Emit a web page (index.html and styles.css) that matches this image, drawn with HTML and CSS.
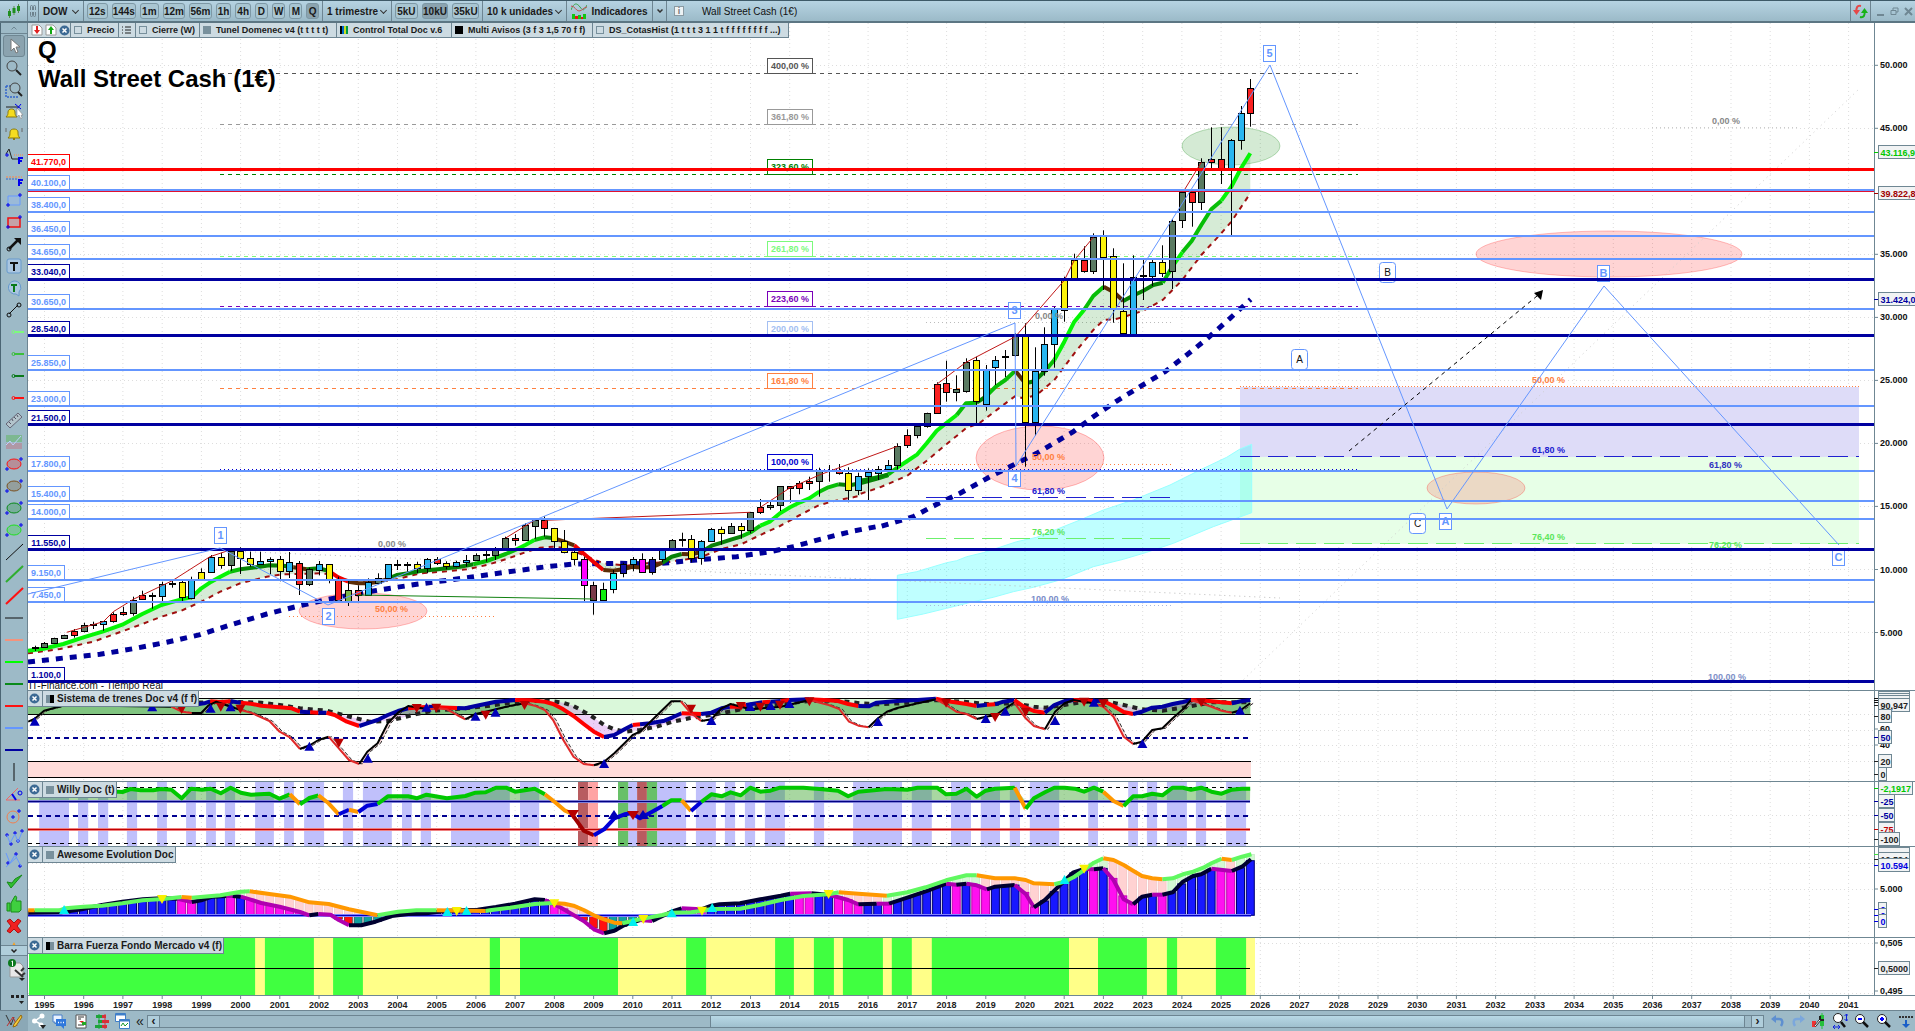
FILE: index.html
```html
<!DOCTYPE html>
<html lang="es">
<head>
<meta charset="utf-8">
<title>DOW - Wall Street Cash (1€)</title>
<link rel="stylesheet" href="styles.css">
</head>
<body>
<header class="toolbar">
  <button class="seg seg-logo" aria-label="Tipo de gráfico"><svg width="14" height="14" viewBox="0 0 14 14"><path d="M2.500 5v9M7 2v9M11.500 0v9" stroke="#5b8a4a"/><path d="M1 7h3v5H1zM5.500 4h3v5h-3zM10 2h3v5h-3z" fill="#1f8f1f"/></svg></button>
  <div class="seg seg-grip"><svg width="8" height="14" viewBox="0 0 8 14" fill="none" stroke="#6d818c"><path d="M1.500 6V2.500a1 1 0 0 1 2 0V6M4.500 6V2.500a1 1 0 0 1 2 0V6M1.500 8v3.500a1 1 0 0 0 2 0V8M4.500 8v3.500a1 1 0 0 0 2 0V8"/></svg></div>
  <div class="seg drop drop-symbol"><select aria-label="Valor"><option>DOW</option></select></div>
  <div class="seg group group-time">
    <button class="w20">12s</button><button class="w24">144s</button><button class="w18">1m</button><button class="w23">12m</button><button class="w23">56m</button><button class="w16">1h</button><button class="w16">4h</button><button class="w12">D</button><button class="w14">W</button><button class="w12">M</button><button class="w12 on">Q</button>
  </div>
  <div class="seg drop drop-period"><select aria-label="Periodo"><option>1 trimestre</option></select></div>
  <div class="seg group group-units">
    <button class="w23">5kU</button><button class="w27 on">10kU</button><button class="w27">35kU</button>
  </div>
  <div class="seg drop drop-units"><select aria-label="Unidades"><option>10 k unidades</option></select></div>
  <button class="seg seg-ind"><svg width="16" height="16" viewBox="0 0 16 16" fill="none"><path d="M0 7C3-1 6 0 9 4s4 4 7-2" stroke="#3aa64a"/><path d="M0 3c4 0 5 5 8 5s5-4 8-4" stroke="#c05050"/><path d="M1 16v-5h3v2h3v-1h3v2h2v-3h3v5z" fill="#12c512"/><path d="M4 16v-3h3v3zM10 16v-2h2v2z" fill="#e11"/></svg>Indicadores</button>
  <button class="seg seg-chev" aria-label="Más indicadores"><svg width="6" height="4" viewBox="0 0 6 4" fill="none" stroke="#333" stroke-width="1.500"><path d="M.5.500 3 3 5.500.500"/></svg></button>
  <span class="info">i</span>
  <span class="instrument">Wall Street Cash (1€)</span>
  <button class="seg seg-sync" aria-label="Sincronizar"><svg width="15" height="15" viewBox="0 0 15 15" fill="none"><path d="M8 2C4 1 3 4 3.500 8" stroke="#e54848" stroke-width="2"/><path d="M0 6l3.500 5L7 6z" fill="#e54848"/><path d="M7 13c4 1 5-2 4.500-6" stroke="#18b318" stroke-width="2"/><path d="M15 9l-3.500-5L8 9z" fill="#18b318"/></svg></button>
  <div class="win">
    <button aria-label="Minimizar"><svg width="9" height="9" viewBox="0 0 9 9"><path d="M1 8h7" stroke="#6f8793" stroke-width="2"/></svg></button>
    <button aria-label="Restaurar"><svg width="9" height="9" viewBox="0 0 9 9" fill="none" stroke="#6f8793"><path d="M3 3V1h5v4H6M1 3.500h5v4H1z"/></svg></button>
    <button aria-label="Cerrar"><svg width="9" height="9" viewBox="0 0 9 9"><path d="M1 1l7 7M8 1L1 8" stroke="#6f8793" stroke-width="2"/></svg></button>
  </div>
</header>
<main class="work">
  <nav class="side">
    <button class="scroller" aria-label="Subir"><svg width="6" height="4" viewBox="0 0 6 4" fill="none" stroke="#6f8793"><path d="M.5 3.500 3 1l2.500 2.500"/></svg></button>
    <div class="tools" id="tools"></div>
    <button class="scroller down" aria-label="Bajar"><svg width="6" height="4" viewBox="0 0 6 4" fill="none" stroke="#222" stroke-width="1.500"><path d="M.5.500 3 3 5.500.500"/></svg></button>
    <div class="side-end">
      <button aria-label="Ajustes"><svg width="20" height="24" viewBox="0 0 20 24"><path d="M3 5h10l3 3v11H3z" fill="#e8e8e8" stroke="#999"/><path d="M8 12l8 7m-2-6 3-3m-3 8 4-3" stroke="#333" stroke-width="2"/><circle cx="5" cy="5" r="4" fill="#0c7a1e"/><path d="M4.500 3.500 5.500 3v5" stroke="#fff" fill="none"/><path d="M12 20h6l-3 3z" fill="#222"/></svg></button>
      <button aria-label="Más"><svg width="16" height="12" viewBox="0 0 16 12" fill="#222"><path d="M2 1h3v3H2zM7 1h3v3H7zM12 1h3v3h-3zM10 7h5l-2.500 3z"/></svg></button>
    </div>
  </nav>
  <div class="charts">
    <section class="pane pane-price">
      <svg id="price"></svg>
      <div class="tabs">
        <div class="tab tab-icons"><svg width="12" height="12" viewBox="0 0 12 12"><path d="M1 1h7l3 3v7H1z" fill="#fff" stroke="#999"/><path d="M5 2h2v4h2L6 10 3 6h2z" fill="#e02020"/></svg><svg width="12" height="12" viewBox="0 0 12 12"><path d="M1 1h7l3 3v7H1z" fill="#fff" stroke="#999"/><path d="M5 10V6H3l3-4 3 4H7v4z" fill="#12a812"/></svg><svg class="x" width="11" height="11" viewBox="0 0 11 11"><circle cx="5.500" cy="5.500" r="5" fill="#3c6a94"/><path d="M3.500 3.500l4 4m0-4l-4 4" stroke="#fff" stroke-width="1.500"/></svg></div>
        <button class="tab tab-precio"><i class="sw"></i>Precio</button>
        <button class="tab tab-list" aria-label="Lista"><svg width="9" height="8" viewBox="0 0 9 8"><path d="M0 1h1M0 4h1M0 7h1M3 1h6M3 4h6M3 7h6" stroke="#222"/></svg></button>
        <button class="tab tab-cierre"><i class="sw"></i>Cierre (W)</button>
        <button class="tab tab-tunel"><i class="sw grey"></i>Tunel Domenec v4 (t t t t t)</button>
        <button class="tab tab-control"><i class="sw bars"></i>Control Total Doc v.6</button>
        <button class="tab tab-multi"><i class="sw black"></i>Multi Avisos (3 f 3 1,5 70 f f)</button>
        <button class="tab tab-cotas"><i class="sw"></i>DS_CotasHist (1 t t t 3 1 1 t f f f f f f f f ...)</button>
      </div>
    </section>
    <section class="pane pane-trenes"><svg id="trenes"></svg>
      <div class="tabs"><button class="tab tab-x" aria-label="Cerrar"><svg class="x" width="11" height="11" viewBox="0 0 11 11"><circle cx="5.500" cy="5.500" r="5" fill="#3c6a94"/><path d="M3.500 3.500l4 4m0-4l-4 4" stroke="#fff" stroke-width="1.500"/></svg></button><button class="tab"><i class="sw half"></i>Sistema de trenes Doc v4 (f f)</button></div></section>
    <section class="pane pane-willy"><svg id="willy"></svg>
      <div class="tabs"><button class="tab tab-x" aria-label="Cerrar"><svg class="x" width="11" height="11" viewBox="0 0 11 11"><circle cx="5.500" cy="5.500" r="5" fill="#3c6a94"/><path d="M3.500 3.500l4 4m0-4l-4 4" stroke="#fff" stroke-width="1.500"/></svg></button><button class="tab"><i class="sw grey"></i>Willy Doc (t)</button></div></section>
    <section class="pane pane-awesome"><svg id="awesome"></svg>
      <div class="tabs"><button class="tab tab-x" aria-label="Cerrar"><svg class="x" width="11" height="11" viewBox="0 0 11 11"><circle cx="5.500" cy="5.500" r="5" fill="#3c6a94"/><path d="M3.500 3.500l4 4m0-4l-4 4" stroke="#fff" stroke-width="1.500"/></svg></button><button class="tab"><i class="sw grey"></i>Awesome Evolution Doc</button></div></section>
    <section class="pane pane-barra"><svg id="barra"></svg>
      <div class="tabs"><button class="tab tab-x" aria-label="Cerrar"><svg class="x" width="11" height="11" viewBox="0 0 11 11"><circle cx="5.500" cy="5.500" r="5" fill="#3c6a94"/><path d="M3.500 3.500l4 4m0-4l-4 4" stroke="#fff" stroke-width="1.500"/></svg></button><button class="tab"><i class="sw half flip"></i>Barra Fuerza Fondo Mercado v4 (f)</button></div></section>
    <div class="years"><svg id="years"></svg></div>
  </div>
</main>
<footer class="bottom">
  <button class="pencil" aria-label="Dibujo"><svg width="18" height="16" viewBox="0 0 18 16" fill="none"><path d="M1 2l5 10 3-8" stroke="#333"/><path d="M2 13L8 4l4 9" stroke="#c03030"/><path d="M16 2L9 11l-1 3 3-1 6-9z" fill="#f7c93a" stroke="#946a10"/></svg></button>
  <button aria-label="Compartir"><svg width="16" height="16" viewBox="0 0 16 16"><path d="M11 3L4 8l7 4" stroke="#fff" stroke-width="1.500" fill="none"/><circle cx="11" cy="3" r="2.500" fill="#fff"/><circle cx="3.500" cy="8" r="2.500" fill="#fff"/><circle cx="10" cy="12" r="2.500" fill="#fff"/><path d="M9 12h6l-3 4z" fill="#222"/></svg></button>
  <button aria-label="Chat"><svg width="15" height="15" viewBox="0 0 15 15"><path d="M1 1h9v7H5L3 10V8H1z" fill="#e9f2ff" stroke="#4a80c8"/><path d="M4 5h10v7h-2v3l-3-3H4z" fill="#2f78dc"/><path d="M6 8.500h1m1.500 0h1m1.500 0h1" stroke="#fff" stroke-width="1.500"/></svg></button>
  <button aria-label="Noticias"><svg width="14" height="15" viewBox="0 0 14 15"><path d="M2 1h10v13H2z" fill="#fff" stroke="#555"/><path d="M4 3h6M4 5h3M4 11h6" stroke="#333"/><path d="M5 7h5l-2 2z" fill="#d22"/><path d="M8 8h4v3H8z" fill="#2a2"/></svg></button>
  <button aria-label="Libro de órdenes"><svg width="14" height="15" viewBox="0 0 14 15"><path d="M1 1h6v3H1zM3 6h4v3H3zM0 11h7v3H0z" fill="#1da53a"/><path d="M7 1h4v3H7zM7 6h7v3H7zM7 11h5v3H7z" fill="#d9303a"/><path d="M4 0v15" stroke="#1da53a"/><path d="M10 0v15" stroke="#d9303a"/></svg></button>
  <button aria-label="Ventanas"><svg width="16" height="16" viewBox="0 0 16 16"><path d="M.5.500h10v8H.5z" fill="#fff" stroke="#3f7fc8"/><path d="M.5 1.500h10" stroke="#3f7fc8" stroke-width="2"/><path d="M4.500 6.500h10v9h-10z" fill="#fff" stroke="#3f7fc8"/><path d="M4.500 7.500h10" stroke="#3f7fc8" stroke-width="2"/><path d="M6 13l2-3 2 3 3-3" stroke="#1a9a2a" fill="none"/></svg></button>
  <button class="more">«</button>
  <div class="scrollbar"><button class="arrow">‹</button><div class="track"><div class="thumb"></div></div><button class="arrow">›</button></div>
  <div class="zooms">
    <button aria-label="Deshacer"><svg width="14" height="14" viewBox="0 0 14 14"><path d="M3 5h5c4 0 4 4 2 7" fill="none" stroke="#5e8fd0" stroke-width="2.500"/><path d="M0 5l5-4v8z" fill="#5e8fd0"/></svg></button>
    <button aria-label="Rehacer"><svg width="14" height="14" viewBox="0 0 14 14"><path d="M11 5H6C2 5 2 9 4 12" fill="none" stroke="#7ba7dc" stroke-width="2.500"/><path d="M14 5L9 1v8z" fill="#7ba7dc"/></svg></button>
    <button aria-label="Configurar"><svg width="15" height="16" viewBox="0 0 15 16"><path d="M9 2h4v11H9z" fill="#25c03a"/><path d="M11 0v16" stroke="#25c03a"/><path d="M1 8h4v6H1z" fill="#e33"/><path d="M4 13l6-7m-1-3v4h4" stroke="#222" stroke-width="2" fill="none"/><path d="M4 13l5-6" stroke="#fff"/></svg></button>
    <button aria-label="Ajustar zoom"><svg width="16" height="16" viewBox="0 0 16 16"><circle cx="6" cy="5" r="4.500" fill="#fff" stroke="#222"/><path d="M9 9l4 5" stroke="#111" stroke-width="2.500"/><path d="M14.500 1v7m-2-5 2-2 2 2m-4 3 2 2 2-2M1 14h7m-5-2-2 2 2 2m3-4 2 2-2 2" stroke="#12d" fill="none"/></svg></button>
    <button aria-label="Alejar"><svg width="16" height="16" viewBox="0 0 16 16"><circle cx="6" cy="6" r="4.500" fill="#fff" stroke="#222"/><path d="M4 6h4" stroke="#00f" stroke-width="2"/><path d="M9 9l5 5" stroke="#111" stroke-width="2.500"/></svg></button>
    <button aria-label="Acercar"><svg width="16" height="16" viewBox="0 0 16 16"><circle cx="6" cy="6" r="4.500" fill="#fff" stroke="#222"/><path d="M4 6h4M6 4v4" stroke="#00f" stroke-width="2"/><path d="M9 9l5 5" stroke="#111" stroke-width="2.500"/></svg></button>
    <button aria-label="Ir al final"><svg width="16" height="16" viewBox="0 0 16 16"><path d="M1 3h2v2H1zM4 3h2v2H4zM7 3h2v2H7zM10 3h2v2h-2zM13 3h2v2h-2z" fill="#333"/><path d="M7 7h2v4h3l-4 4-4-4h3z" fill="#1a5fc8"/></svg></button>
  </div>
</footer>
<script src="chart.js"></script>
</body>
</html>
```

FILE: styles.css
```css
* { box-sizing: border-box; }
html, body { height: 100%; margin: 0; }
body {
  display: flex;
  flex-direction: column;
  overflow: hidden;
  background: #fff;
  color: #111;
  font-family: "Liberation Sans", Arial, sans-serif;
  font-size: 10px;
}
button, select {
  margin: 0;
  padding: 0;
  border: 0;
  background: none;
  color: #1a1a1a;
  font: inherit;
  font-weight: bold;
}
svg { display: block; flex: none; }

/* top toolbar */
.toolbar {
  display: flex;
  align-items: stretch;
  flex: none;
  height: 23px;
  border-top: 1px solid #3e5a68;
  border-bottom: 2px solid #5c7683;
  background: linear-gradient(#b6d3e2, #9bbac8);
}
.seg {
  display: flex;
  align-items: center;
  justify-content: center;
  border-right: 1px solid #6d8592;
  white-space: nowrap;
}
.seg-logo { width: 28px; }
.seg-grip { width: 11px; }
.drop { position: relative; }
.drop select {
  width: 100%;
  padding-left: 4px;
  appearance: none;
  outline: none;
}
.drop::after {
  content: "";
  position: absolute;
  right: 5px;
  top: 7px;
  width: 4px;
  height: 4px;
  border: solid #333;
  border-width: 0 1px 1px 0;
  transform: rotate(45deg);
}
.drop-symbol { width: 45px; }
.drop-period { width: 69px; }
.drop-units { width: 84px; }
.group { gap: 4px; padding: 0 3px; }
.group-time { width: 239px; }
.group-units { width: 91px; }
.group button {
  height: 16px;
  border: 1px solid #7d98a5;
  border-radius: 3px;
  background: #a9c6d2;
}
.group .on { background: #8ba3af; }
.w12 { width: 13px; }
.w14 { width: 14px; }
.w16 { width: 16px; }
.w18 { width: 19px; }
.w20 { width: 21px; }
.w23 { width: 23px; }
.w24 { width: 25px; }
.w27 { width: 27px; }
.seg-ind { gap: 4px; width: 86px; }
.seg-chev { width: 14px; }
.info {
  align-self: center;
  width: 10px;
  height: 10px;
  margin-left: 7px;
  border: 1px solid #8a9aa2;
  background: #eef2f4;
  color: #777;
  font-size: 9px;
  font-weight: bold;
  line-height: 8px;
  text-align: center;
}
.instrument { flex: 1; align-self: center; margin-left: 18px; }
.seg-sync { width: 21px; border-left: 1px solid #6d8592; }
.win { display: flex; align-items: center; gap: 5px; width: 44px; padding-left: 5px; }

/* drawing tools */
.work { display: flex; flex: 1; min-height: 0; }
.side {
  display: flex;
  flex-direction: column;
  flex: none;
  width: 28px;
  border-left: 1px solid #4b6674;
  border-right: 1px solid #6d8592;
  background: #9dbac7;
}
.scroller {
  display: flex;
  align-items: center;
  justify-content: center;
  flex: none;
  height: 11px;
  border-bottom: 1px solid #6d8592;
}
.scroller.down { border-top: 1px solid #6d8592; background: #b0cedb; }
.tools { flex: 1; min-height: 0; padding-top: 1px; overflow: hidden; }
.tool {
  display: flex;
  align-items: center;
  justify-content: center;
  width: 22px;
  height: 22px;
  margin: 0 2px;
  border-radius: 3px;
}
.tool.on { border: 1px solid #6f8793; background: #8ba3af; }
.side-end {
  display: flex;
  flex-direction: column;
  align-items: center;
  justify-content: space-between;
  flex: none;
  height: 54px;
  padding: 2px 0 4px 6px;
}

/* chart panes */
.charts { display: flex; flex-direction: column; flex: 1; min-width: 0; }
.pane { position: relative; flex: 1 1 0; min-height: 0; }
.pane > svg, .years > svg { width: 100%; height: 100%; }
.pane-price { flex-grow: 668; }
.pane-trenes, .pane-awesome { flex-grow: 91; }
.pane-willy { flex-grow: 65; }
.pane-barra { flex-grow: 58; }
.years { flex: none; height: 14px; }
.pane text, .years text { font-size: 9px; font-weight: bold; }
.pane .heading { font-size: 24px; }
.pane .credit { font-size: 10px; font-weight: normal; }
.pane .mark { font-size: 11px; }
.pane .note { font-size: 10px; font-weight: normal; }
.tabs { position: absolute; top: 0; left: 0; display: flex; height: 16px; }
.pane-price .tabs { height: 15px; }
.tab {
  display: flex;
  align-items: center;
  gap: 5px;
  padding: 0 2px 0 3px;
  border: solid #6d8592;
  border-width: 0 1px 1px 0;
  background: #cddbe2;
  font-size: 9px;
  white-space: nowrap;
}
.pane-trenes .tab, .pane-willy .tab, .pane-awesome .tab, .pane-barra .tab { font-size: 10px; gap: 3px; padding-right: 1px; }
.tab-icons { width: 43px; gap: 2px; }
.tab-x { width: 15px; padding: 0 1px; }
.tab-precio { width: 48px; }
.tab-list { width: 17px; }
.tab-cierre { width: 64px; }
.tab-tunel { width: 137px; }
.tab-control { width: 115px; }
.tab-multi { width: 141px; }
.tab-cotas { width: 196px; }
.sw { flex: none; width: 8px; height: 8px; border: 1px solid #78909c; }
.sw.grey { background: #78909c; }
.sw.black { border-color: #000; background: #000; }
.sw.half { border: 0; background: linear-gradient(90deg, #78909c 50%, #000 50%); }
.sw.flip { background: linear-gradient(90deg, #000 50%, #78909c 50%); }
.sw.bars { border: 0; background: linear-gradient(90deg, #000 25%, #06c 25% 50%, #cd2 50% 75%, #094 75%); }

/* bottom bar */
.bottom {
  display: flex;
  align-items: center;
  flex: none;
  height: 21px;
  border-top: 1px solid #6d8592;
  background: #9dbac7;
}
.bottom > button { display: flex; justify-content: center; width: 21px; }
.bottom .pencil { align-items: center; width: 28px; height: 20px; background: #8ba8b6; }
.bottom .more { width: 14px; font-size: 14px; font-weight: normal; line-height: 14px; }
.scrollbar { display: flex; flex: 1; height: 13px; }
.arrow { width: 13px; border: 1px solid #6d8592; background: #b0cedb; font-size: 12px; line-height: 8px; }
.track { flex: 1; padding: 0 6px 0 34%; border: solid #6d8592; border-width: 1px 0; }
.thumb { height: 100%; border: solid #6d8592; border-width: 0 1px; background: linear-gradient(#b8d8e5, #9fc0ce); }
.zooms { display: flex; gap: 6px; width: 151px; padding-left: 7px; overflow: hidden; }
```

FILE: chart.js
```js
// ---- drawing tools -------------------------------------------------------
const plus = (x, y) => `<path d="M${x - 2} ${y}h4M${x} ${y - 2}v4" stroke="#00e"/>`;
const seg = c => `<path d="M9 9h11" stroke="${c}" stroke-width="2"/><circle cx="8.500" cy="9" r="1.500" fill="none" stroke="${c}"/>`;
const oval = c => `<ellipse cx="9" cy="9" rx="7" ry="5" fill="${c}" fill-opacity=".25" stroke="${c}"/>${plus(16, 4)}${plus(2, 14)}`;
const slant = (c, w) => `<path d="M1 17L18 1" stroke="${c}" stroke-width="${w}"/>`;
const flat = (c, w) => `<path d="M0 9h18" stroke="${c}" stroke-width="${w}"/>`;
const bell = '<path d="M3 13c2-2 2-3 2-6 0-4 8-4 8 0 0 3 0 4 2 6z" fill="#f5dc1e" stroke="#8a7a10"/><path d="M9 13v2" stroke="#8a7a10" stroke-width="2"/>';
const toolIcons = [
  '<path d="M6 2v12l3-3 2 5 2-1-2-5h4z" fill="#fff" stroke="#777"/>',
  '<circle cx="7" cy="7" r="5" fill="none" stroke="#444"/><path d="M11 11l5 5" stroke="#222" stroke-width="2"/>',
  '<path d="M1 5v11h12M1 5h5" fill="none" stroke="#36c" stroke-dasharray="2 1" stroke-width="1.500"/><circle cx="10" cy="7" r="5" fill="#9dbac7" stroke="#444"/><path d="M13 11l4 4" stroke="#222" stroke-width="2"/>',
  '<path d="M1 4h13" stroke="#222"/><path d="M1 14c2-2 2-3 2-5 0-4 7-4 7 0 0 2 0 3 2 5z" fill="#f5dc1e" stroke="#8a7a10"/><path d="M10 1l6 5m0-5l-4 5" stroke="#00e"/><path d="M12 5v9l2-2 2 4 1-1-1-3h2z" fill="#fff" stroke="#777" stroke-width=".5"/>',
  bell + '<path d="M1 3v4M17 3v4" stroke="#666"/>',
  '<path d="M1 7l3-5 3 10h6" fill="none" stroke="#222"/>' + plus(2, 8) + '<path d="M9 8h9" stroke="#f84" stroke-dasharray="1 1"/><path d="M14 17v-6h4M14 14h3" fill="none" stroke="#00e" stroke-width="2"/>',
  '<path d="M1 8h16" stroke="#f84" stroke-dasharray="2 1"/><path d="M1 10h12" stroke="#36c" stroke-dasharray="2 1"/><path d="M14 17v-6h4M14 14h3" fill="none" stroke="#00e" stroke-width="2"/>',
  '<path d="M3 5h12v9H3z" fill="#9bf" fill-opacity=".3" stroke="#69f"/>' + plus(15, 4) + plus(3, 14),
  '<path d="M3 5h12v9H3z" fill="#e88" fill-opacity=".5" stroke="#e11" stroke-width="1.500"/>' + plus(15, 4) + plus(3, 14),
  '<path d="M4 14l9-9" stroke="#111" stroke-width="2.500"/><circle cx="4" cy="14" r="2" fill="none" stroke="#111"/><path d="M9 3h7v7z" fill="#111"/>',
  '<rect x="2" y="2" width="14" height="14" rx="2" fill="#aac6e0" stroke="#69c"/><path d="M5 6h8M9 6v8" stroke="#111" stroke-width="2"/>',
  '<path d="M9 2a6.500 6.500 0 1 0 2 13l3 2v-4A6.500 6.500 0 0 0 9 2z" fill="#aac6e0" stroke="#69c"/><path d="M6 6h6M9 6v7" stroke="#0a7a1a" stroke-width="2"/>',
  '<path d="M4 13l9-9" stroke="#111"/><circle cx="4" cy="14" r="2" fill="none" stroke="#111"/><circle cx="14" cy="4" r="2" fill="none" stroke="#111"/>',
  seg('#7dfa7d'), seg('#3cbf3c'), seg('#0a7a1a'), seg('#f11'),
  '<path d="M1 13L13 2l4 4L5 17z" fill="#b3c4cc" stroke="#667"/><path d="M4 11l2 2M7 8l1 2M9 6l2 2M12 4l1 2" stroke="#556"/>',
  '<path d="M1 2h16v7H1z" fill="#6fb87a" opacity=".7"/><path d="M1 10h16v6H1z" fill="#b78a98" opacity=".7"/><path d="M1 12l4-4 3 4 8-9" fill="none" stroke="#bcd0ff"/>',
  oval('#f11'), oval('#7a5020'), oval('#0a8a1a'), oval('#1fe01f'),
  slant('#111', 1), slant('#2fae2f', 2), slant('#f11', 2),
  flat('#111', 1), flat('#f4937c', 2), flat('#0f0', 2), flat('#0a8a1a', 2), flat('#f11', 2), flat('#6496ff', 2), flat('#0000a0', 2),
  '<path d="M9 0v18" stroke="#111"/>',
  '<path d="M1 15h14M1 15L13 3" stroke="#e66"/><path d="M7 9l4 6" stroke="#00e" stroke-width="2"/><circle cx="15" cy="8" r="2" fill="none" stroke="#00e"/>',
  '<circle cx="8" cy="10" r="6" fill="none" stroke="#f08050"/>' + plus(8, 10) + plus(14, 4),
  plus(2, 6) + plus(6, 15) + plus(10, 4) + plus(13, 12) + plus(17, 2) + '<path d="M2 6l3 8 5-9 3 8 4-10" fill="none" stroke="#69f"/>',
  plus(3, 12) + plus(11, 3) + plus(15, 15) + '<path d="M1 2l4 10 5-8 6 11M1 16L12 6" fill="none" stroke="#69f"/>',
  '<path d="M2 9l4 6L17 2l-7 4-3 4z" fill="#2fbf2f" stroke="#188a18"/>',
  '<path d="M2 8h3v8H2zM6 8l4-7c3 0 1 4 1 5h5v9l-2 2H6z" fill="#3fd03f" stroke="#188a18"/>',
  '<path d="M2 4l3-2 4 4 4-4 3 2-4 5 4 5-3 2-4-4-4 4-3-2 4-5z" fill="#f02020" stroke="#b01010"/>',
  '<path d="M9 3l5 10H4z" fill="#f5a020"/>'
];
document.getElementById('tools').innerHTML = toolIcons.map((p, i) =>
  `<button class="tool${i ? '' : ' on'}" aria-label="Herramienta ${i + 1}"><svg width="19" height="18" viewBox="0 0 19 18">${p}</svg></button>`).join('');

// ---- plot frame ----------------------------------------------------------
const AXIS = 41, GREY = '#6f8793', BLUE = '#6496ff', NAVY = '#0000a0';
const Q0 = 44.3, QW = 9.805;                 // first quarter and its step
const price = p => 695.5 - p * 0.012605;     // price to board height
let W, H, X, Y, out;

function open(id, top, height) {
  const el = document.getElementById(id);
  W = el.clientWidth; H = el.clientHeight; out = [];
  const sx = (W - AXIS) / 1846, sy = H / height;
  X = x => +((x - 28) * sx).toFixed(1);
  Y = y => +((y - top) * sy).toFixed(1);
  return () => { el.innerHTML = out.join(''); };
}
const put = s => out.push(s);
const line = (x1, y1, x2, y2, c, w = 1, dash = '') =>
  put(`<line x1="${X(x1)}" y1="${Y(y1)}" x2="${X(x2)}" y2="${Y(y2)}" stroke="${c}" stroke-width="${w}" stroke-dasharray="${dash}"/>`);
const hline = (y, x1, x2, c, w = 1, dash = '') => {
  const yy = w % 2 ? Math.floor(Y(y)) + 0.5 : Math.round(Y(y));
  put(`<line x1="${X(x1)}" y1="${yy}" x2="${X(x2)}" y2="${yy}" stroke="${c}" stroke-width="${w}" stroke-dasharray="${dash}"/>`);
};
const rect = (x1, y1, x2, y2, c, extra = '') =>
  put(`<rect x="${X(x1)}" y="${Y(y1)}" width="${(X(x2) - X(x1)).toFixed(1)}" height="${(Y(y2) - Y(y1)).toFixed(1)}" fill="${c}" ${extra}/>`);
const text = (x, y, s, c, cls = '', anchor = 'start') =>
  put(`<text x="${X(x)}" y="${Y(y)}" fill="${c}" class="${cls}" text-anchor="${anchor}">${s}</text>`);
const poly = (pts, fill, extra = '') =>
  put(`<polygon points="${pts.map(p => X(p[0]) + ',' + Y(p[1])).join(' ')}" fill="${fill}" ${extra}/>`);
const path = (pts, c, w, dash = '') =>
  put(`<polyline points="${pts.map(p => X(p[0]) + ',' + Y(p[1])).join(' ')}" fill="none" stroke="${c}" stroke-width="${w}" stroke-dasharray="${dash}"/>`);
const tri = (x, y, up, c, s = 5) => {
  const a = X(x), b = Y(y), k = up ? 1 : -1;
  put(`<path d="M${a - s} ${b + 4 * k}h${2 * s}l${-s} ${-9 * k}z" fill="${c}"/>`);
};
function box(x, y, w, h, s, c, bg = '#fff', border = c, cls = '', r = 0) {
  const top = Math.round(Y(y));
  put(`<rect x="${Math.round(X(x)) + .5}" y="${top + .5}" width="${w}" height="${h}" rx="${r}" fill="${bg}" stroke="${border}"/>`);
  put(`<text x="${Math.round(X(x)) + .5 + w / 2}" y="${top + Math.floor(h / 2) + 4}" fill="${c}" class="${cls}" text-anchor="middle">${s}</text>`);
}
// Runs of points: "@x,y" moves the origin, a trailing letter changes the colour.
function runs(src, kx) {
  let ox = 0, oy = 0, key = '';
  const pts = [];
  src.trim().split(/\s+/).forEach(t => {
    if (t[0] === '@') { [ox, oy] = t.slice(1).split(',').map(Number); return; }
    const m = t.match(/^(-?[\d.]+),(-?[\d.]+)([a-z]?)$/);
    if (m[3]) key = m[3];
    pts.push([ox + m[1] / kx, oy + m[2] / 3, key]);
  });
  return pts;
}
function coloured(pts, map, w) {
  let i = 0;
  while (i < pts.length - 1) {
    let j = i + 1;
    while (j < pts.length - 1 && pts[j][2] === pts[i][2]) j++;
    put(`<polyline points="${pts.slice(i, j + 1).map(p => X(p[0]) + ',' + Y(p[1])).join(' ')}" fill="none" stroke="${map[pts[i][2]]}" stroke-width="${w}" stroke-linejoin="round"/>`);
    i = j;
  }
}
const at = (pts, x) => {
  for (let i = 1; i < pts.length; i++) {
    if (x <= pts[i][0]) {
      const a = pts[i - 1], b = pts[i], t = (x - a[0]) / (b[0] - a[0] || 1);
      return [a[1] + (b[1] - a[1]) * t, a[2]];
    }
  }
  const l = pts[pts.length - 1];
  return [l[1], l[2]];
};
function grid(top, bottom, ys) {
  for (let y = 0; y <= 46; y++) line(44.5 + y * 39.22, top, 44.5 + y * 39.22, bottom, '#ddd', 1, '1 3');
  ys.forEach(y => hline(y, 28, 1874, '#ddd', 1, '1 3'));
}
function axis() {
  const x = W - AXIS + .5;
  put(`<rect x="${x}" y="0" width="${AXIS}" height="${H}" fill="#fff"/>`);
  put(`<line x1="${x}" y1="0" x2="${x}" y2="${H}" stroke="${GREY}"/>`);
  put(`<line x1="0" y1="${H - .5}" x2="${W}" y2="${H - .5}" stroke="${GREY}"/>`);
}
function tick(y, s, c = '#111') {
  put(`<line x1="${W - AXIS}" y1="${Y(y)}" x2="${W - AXIS + 4}" y2="${Y(y)}" stroke="${c === '#111' ? GREY : c}"/>`);
  put(`<text x="${W - AXIS + 6}" y="${Y(y) + 3}" fill="${c}">${s}</text>`);
}
function tag(y, s, c, w) {
  const x = W - AXIS + 4.5, yy = Math.round(Y(y)) - 6.5;
  put(`<line x1="${W - AXIS}" y1="${yy + 7}" x2="${W - AXIS + 4}" y2="${yy + 7}" stroke="${c}"/>`);
  put(`<rect x="${x}" y="${yy}" width="${w}" height="13" fill="#f1f3f4" stroke="${GREY}"/>`);
  put(`<text x="${x + 2}" y="${yy + 10}" fill="${c}">${s}</text>`);
}

// ---- series --------------------------------------------------------------
// kind, body top, body bottom, high, low
const candleRuns = [
  [-1, 240, `k 1221 1223 1217 1233|g 1210 1222 1206 1224|g 1195 1211 1193 1211|g 1186 1196 1184 1196|r 1174 1187 1167 1193|g 1156 1175 1148 1177|g 1153 1156 1145 1167|b 1145 1154 1143 1172|r 1123 1144 1117 1148|r 1117 1124 1100 1127|g 1080 1118 1070 1127|r 1065 1078 1052 1080|k 1066 1068 1058 1106|b 1033 1070 1025 1083|k 1030 1032 1022 1043|y 1028 1072 1020 1085|b 1020 1073 1010 1078|y 997 1018 985 1023|b 952 997 945 998|y 951 976 938 986|g 933 976 930 992|y 933 955 922 1002|y 955 974 935 980|b 964 973 935 975|b 958 965 952 1003|y 958 994 948 1024|b 967 995 936 1014|r 970 1033 963 1065|g 988 1034 983 1038|b 972 989 963 1006|y 973 1018 972 1030|r 1018 1080 1010 1080|o 1051 1083 1020 1098|r 1051 1066 1036 1087|b 1027 1066 1015 1066|g 1015 1030 1000 1033|b 973 1015 972 1015|k 973 975 960 990|k 973 975 966 995|y 973 985 965 1000`],
  [39, 400, `b 478 505 474 520|r 478 490 471 495|y 490 499 484 508|b 487 499 482 502|b 481 487 465 500|g 466 482 460 482|k 464 466 445 485|g 445 466 441 480|g 414 446 410 448|r 414 421 402 437|g 377 421 370 421|g 361 380 358 416|r 361 385 349 410|y 385 424 384 450|y 424 456 390 460|y 456 478 450 496|m 478 556 470 608|w 556 600 545 644|l 568 600 548 600|c 520 568 510 580|n 493 520 488 532|b 478 493 471 514|m 478 517 460 517|n 478 517 471 524|b 452 478 450 487|g 421 447 417 448|k 418 420 398 440|y 418 474 405 487|b 424 475 420 494|b 388 424 384 424|y 388 400 380 434|g 379 401 369 402|y 379 391 369 416|g 337 391 336 400|r 322 338 297 342|g 316 321 300 329|g 259 316 258 333|r 259 265 258 308|r 250 265 243 283|r 244 250 230 270|g 211 244 203 290|k 211 213 195 245|r 211 220 192 224|y 220 271 202 307|b 230 271 218 285|b 217 229 205 300|b 208 219 198 240|b 196 208 180 215|g 139 196 130 208`],
  [88, 40, `r 1186 1216 1168 1224|g 1159 1186 1150 1195|g 1120 1159 1118 1163|r 1033 1120 1027 1122|r 1030 1057 962 1085|g 1048 1057 1006 1084|g 967 1054 955 1058|y 961 1084 950 1150|b 988 1092 975 1112|b 961 983 948 1035|k 948 951 930 1011|g 888 946 880 950|y 884 1147 850 1280|b 994 1147 922 1187|b 913 994 862 1007|b 808 913 800 983|y 721 810 710 845|y 661 716 641 720|r 661 694 619 698|g 592 694 580 702|y 588 650 571 750|y 650 810 625 848|y 814 880 670 882|b 712 883 646 885|k 706 708 660 780|b 667 709 660 738|y 667 700 616 711|g 544 694 538 747|g 457 541 450 564|r 457 487 450 560|g 367 487 355 510|r 358 367 262 392|r 358 384 262 432|b 301 384 297 585|b 220 301 198 329|r 145 220 117 260`]
];
const candleFill = { g: '#5a7a62', r: '#fa2020', b: '#29b6f0', y: '#fbf30a', m: '#ff00ff', w: '#7a3a48', l: '#10ee10', c: '#10f4f4', n: '#1414a8', o: '#7ab648', k: '#000' };
const fastAvg = runs(`@0,240 84,1232l 130,1226 190,1212 250,1192 310,1174 367,1154 427,1122 484,1095 544,1078 575,1072 604,1045 634,1025 661,1010 690,995g 721,988d 780,980 808,976 850,977 880,982w 920,988d 955,985 985,992r 1015,1012 1045,1025w 1075,1030 1103,1030 1132,1026 1160,1018d 1190,1005 1225,1000
@420,400 0,513 60,507 120,500 160,493g 200,483 257,462 286,450l 316,435 343,420g 375,412d 403,415w 433,425 463,436r 490,460 520,485 550,510w 580,512 608,508 637,500w 668,503 700,500 727,488d 755,470 785,462w 815,463 845,455d 875,437 905,428 935,418 965,409g 995,395 1021,377l 1051,364 1080,340 1110,322 1140,307 1168,295 1198,275g 1225,262 1255,253d 1290,256 1320,250d 1345,243 1375,235 1405,225g
@860,40 0,1323d 52,1313 85,1303g 112,1283l 142,1263 172,1243 200,1210 230,1172 260,1148 290,1125g 318,1090 350,1088d 377,1070g 407,1040 436,1020 466,992w 496,1030d 523,1024 553,995g 583,960l 613,905 643,845 672,810g 700,768 731,740w 762,757 790,783d 817,768 850,752 880,735 908,728g 937,680l 967,637g 995,603 1024,555 1054,508 1084,482l 1114,440 1143,385 1171,340`, 3);
const slowAvg = runs(`@0,240 84,1240 180,1227 280,1205 367,1174 427,1152 484,1130 544,1112 604,1085 661,1055 721,1030 800,1010 850,1003 900,1002 960,1000 1000,1003 1030,1018 1103,1028 1180,1020 1250,1003
@420,400 0,520 80,514 140,508 200,495 257,478 316,457 360,443 403,440 440,445 490,465 550,490 620,497 680,490 740,487 800,478 845,470 905,447 965,432 1021,405 1080,378 1140,345 1198,315 1255,300 1300,292 1320,287
@860,40 0,1362 60,1342 112,1320 142,1307 200,1262 260,1212 318,1165 360,1148 407,1112 466,1068 490,1075 530,1065 583,1020 643,940 700,870 731,840 765,838 800,828 850,812 908,780 967,720 1024,645 1084,580 1114,545 1171,460`, 3);
const longAvg = runs(`@0,240 84,1266 200,1253 300,1243 400,1226 500,1207 600,1184 700,1152 800,1122 900,1097 985,1078 1080,1060 1150,1048 1250,1033
@420,400 150,532 290,512 380,500 460,492 600,490 700,492 760,487 850,478 950,470 1050,455 1120,440 1200,418 1300,393 1380,378
@860,40 60,1460 110,1445 160,1430 220,1398 300,1360 400,1305 460,1275 530,1240 640,1175 700,1130 770,1083 840,1040 915,995 980,945 1045,893 1110,835 1172,778`, 3);
const cloud = runs(`@880,430 52,436 110,425 200,398 230,392 260,380 310,368 410,335 470,322 530,298 600,270 670,240 760,210 870,165 960,120 1040,82 1080,57 1115,43 1115,248 1000,290 880,340 800,367 730,388 640,410 540,450 460,472 400,485 340,502 280,515 200,535 130,552 52,568`, 3);

function drawPrice() {
  const done = open('price', 23, 668);
  grid(23, 690, [50, 45, 40, 35, 30, 25, 20, 15, 10, 5].map(k => price(k * 1000)));
  rect(1240, 387, 1859, 457, '#dedcf8');
  rect(1240, 457, 1859, 544, '#e7ffe7');
  poly(cloud, '#00ffff', 'fill-opacity=".25" stroke="#9ff"');
  const ell = (x, y, rx, ry, c, s) => put(`<ellipse cx="${X(x)}" cy="${Y(y)}" rx="${X(x + rx) - X(x)}" ry="${ry}" fill="${c}" fill-opacity=".17" stroke="${s}" stroke-opacity=".25"/>`);
  ell(363, 611, 64, 18, '#ff0000', '#ff0000');
  ell(1040, 458, 64, 32, '#ff0000', '#ff0000');
  ell(1231, 146, 49, 19, '#008000', '#008000');
  ell(1609, 254, 133, 23, '#ff0000', '#ff0000');
  ell(1476, 488, 49, 16, '#ff2020', '#ff0000');
  line(1240, 683, 1859, 89, '#ccc', 1, '1 4');
  line(230, 551, 560, 565, '#bbb', 1, '1 4');
  line(560, 565, 1280, 598, '#bbb', 1, '1 4');

  [[73, '#555', '400,00 %', '4 4'], [124, '#999', '361,80 %', '4 4'], [174, '#008000', '323,60 %', '4 4'], [256, '#7cfa7c', '261,80 %', '4 4'],
   [306, '#7a00b8', '223,60 %', '4 4'], [336, '#a4bff2', '200,00 %', ''], [388, '#ff8040', '161,80 %', '4 4'], [469, '#0000d0', '100,00 %', '1 3']].forEach(f => {
    if (f[3]) hline(f[0], 220, 1358, f[1], 1, f[3]);
    box(767, f[0] - 15, 45, 15, f[2], f[1]);
  });
  [[322, 926, 1172, '#bbb', '1 3'], [464, 926, 1171, '#ff8040', '1 3'], [497, 926, 1171, '#2020d0', '20 8'], [538, 926, 1171, '#6cf06c', '20 8'], [605, 926, 1171, '#aab8e0', '1 3'],
   [616, 289, 494, '#ff8040', '1 3'], [127, 1652, 1797, '#ccc', '1 3'], [386, 1240, 1859, '#ff8040', '1 2'], [456, 1240, 1859, '#2020d0', '20 8'], [543, 1240, 1859, '#6cf06c', '20 8']]
    .forEach(l => hline(l[0], l[1], l[2], l[3], 1, l[4]));

  poly(fastAvg.concat(slowAvg.slice().reverse()), '#008000', 'fill-opacity=".16"');
  path(slowAvg, '#a01010', 2, '5 5');
  path(longAvg, '#00009a', 5, '7 7');
  coloured(fastAvg, { l: '#05f505', g: '#08be08', d: '#068206', w: '#5a2c06', r: '#f00000' }, 4);

  candleRuns.forEach(([start, top, src]) => src.split('|').forEach((row, n) => {
    const [k, ...v] = row.split(' ');
    const [a, b, hi, lo] = v.map(z => top + z / 3);
    const x = Math.round(X(Q0 + QW * (start + n))) + .5;
    put(`<path d="M${x} ${Y(hi)}V${Y(lo)}" stroke="#000"/>`);
    put(`<rect x="${x - 3}" y="${Math.floor(Y(a)) + .5}" width="6" height="${Math.max(1, Math.round(Y(b) - Y(a)))}" fill="${candleFill[k]}" stroke="#000"/>`);
  }));

  ['@0,240 200,1177 310,1145 340,1115 400,1078 517,1022 630,950 690,930', '@420,400 257,414 345,360', '@420,400 375,361 990,337',
   '@420,400 1021,322 1108,265 1198,225 1432,139', '@860,40 230,1033 318,967 466,890 613,721 643,661 700,592', '@860,40 970,455 1024,367']
    .forEach(s => path(runs(s, 3), '#c01818', 1));
  path([[358, 595], [593, 599]], '#108010', 1);

  text(378, 547, '0,00 %', '#888');
  text(375, 612, '50,00 %', '#ff8040');
  text(1035, 319, '0,00 %', '#888');
  text(1032, 460, '50,00 %', '#ff8040');
  text(1032, 494, '61,80 %', '#2020d0');
  text(1032, 535, '76,20 %', '#5ae65a');
  text(1031, 602, '100,00 %', '#7a8cc8');
  text(1712, 124, '0,00 %', '#888');
  text(1532, 383, '50,00 %', '#ff8040');
  text(1532, 453, '61,80 %', '#2020d0');
  text(1532, 540, '76,40 %', '#5ae65a');
  text(1709, 468, '61,80 %', '#3030c0');
  text(1709, 548, '76,20 %', '#5ae65a');
  text(1708, 680, '100,00 %', '#8090c8');
  text(29, 689, 'IT-Finance.com - Tiempo Real', '#111', 'credit');

  const mark = (x, y, s) => box(x, y, 12, 16, s, BLUE, '#fff', BLUE, 'mark');
  mark(214, 527, '1'); mark(322, 608, '2'); mark(1008, 302, '3'); mark(1008, 470, '4'); mark(1263, 45, '5');
  mark(1439, 513, 'A'); mark(1597, 265, 'B'); mark(1832, 549, 'C');
  const note = (x, y, s) => box(x, y, 16, 20, s, '#111', '#fff', BLUE, 'note', 3);
  note(1291, 349, 'A'); note(1379, 262, 'B'); note(1409, 513, 'C');

  const levels = [['41.770,0', 'r'], ['40.100,0', 'b'], ['38.400,0', 'b'], ['36.450,0', 'b'], ['34.650,0', 'b'], ['33.040,0', 'n'], ['30.650,0', 'b'], ['28.540,0', 'n'], ['25.850,0', 'b'], ['23.000,0', 'b'], ['21.500,0', 'n'], ['17.800,0', 'b'], ['15.400,0', 'b'], ['14.000,0', 'b'], ['11.550,0', 'n'], ['9.150,0', 'b'], ['7.450,0', 'b'], ['1.100,0', 'n']];
  levels.forEach(([s, k]) => {
    const y = price(parseFloat(s.replace('.', '')));
    const c = { r: '#f00', b: BLUE, n: NAVY }[k];
    box(27, y - 15, s.length > 7 ? 42 : 37, 14, s, c);
    hline(y, 28, 1874, c, k === 'b' ? 2 : 3);
  });
  hline(191, 28, 1874, '#e01030', 1);

  path([[28, 594], [220, 548], [328, 605], [1015, 323], [1016, 466], [1270, 65], [1447, 509], [1604, 286], [1839, 545]], BLUE, 1);
  path([[1349, 451], [1537, 296]], '#000', 1, '4 4');
  put(`<path d="M${X(1543)} ${Y(290)}l-9 3 7 7z" fill="#000"/>`);

  text(38, 58, 'Q', '#000', 'heading');
  text(38, 87, 'Wall Street Cash (1€)', '#000', 'heading');

  axis();
  [50, 45, 35, 30, 25, 20, 15, 10, 5].forEach(k => tick(price(k * 1000), k + '.000'));
  tag(152, '43.116,9', '#00c800', 42);
  tag(193, '39.822,8', '#a00000', 42);
  tag(299, '31.424,0', NAVY, 42);
  done();
}

const trend = runs(`@0,640 69,195n 470,195 500,190 515,184r 540,186 565,184n 590,188r 615,191 640,197 685,202 715,205 735,215n 760,217r 780,218n 800,218r 820,225 850,245 880,258n 905,248 925,240 950,225 975,213 1000,205r 1050,200n 1075,202r 1100,203 1120,204n 1140,205 1165,198 1215,185 1262,180r 1300,181 1335,185 1355,192 1380,208 1405,228 1430,252 1455,275 1480,291n 1505,285 1530,268 1550,255r
@640,640 0,253n 25,250 60,242 80,232 102,220r 150,222n 175,218 200,205 220,200r 245,200r 260,195n 300,187r 320,185n 345,183r 366,180n 415,178r 462,181 485,183 510,192 535,198n 560,199 580,188 630,183 680,180 725,176r 750,183 800,192 825,198n 850,194r 870,193n 890,185 917,180r 940,200 965,213 992,218n 1015,195 1040,183 1062,180r 1110,182n 1135,183r 1160,198 1185,216 1208,222n 1230,215 1255,203 1280,200 1305,192 1330,186 1350,180r 1375,181 1400,184 1450,190n 1475,183 1495,180`, 2.45);
const trendLag = runs(`@0,640 69,190 470,188 560,185 640,188 685,195 735,205 800,212 850,228 880,237 905,245 950,243 985,233 1020,222 1060,212 1120,207 1200,197 1262,186 1335,181 1380,188 1405,198 1430,215 1455,233 1480,255 1505,268 1530,275
@640,640 0,270 40,260 80,245 120,235 175,225 230,212 270,203 340,192 415,183 485,182 540,190 580,193 640,190 725,180 800,186 850,192 917,190 965,200 992,203 1040,195 1090,185 1135,182 1185,195 1230,208 1280,212 1330,203 1400,187 1495,187`, 2.45);
const quick = runs(`@0,640 69,245k 85,236 108,212 135,203 160,196 420,200r 445,215 470,219k 493,219 510,197 530,185 565,200 590,210r 615,218 640,232 660,243 685,275 710,292 735,327k 760,315 780,300 805,290r 830,325 855,360 880,372k 900,335 925,310 950,250 975,218 1000,198 1050,208r 1075,205 1095,208 1120,225 1140,238k 1165,222 1190,215 1240,200 1285,190r 1310,197 1335,210 1355,240 1380,300 1405,350 1430,372 1455,376k 1480,365 1505,340 1530,310 1550,285
@640,640 0,275 30,240 55,210 77,184 100,184r 125,220 150,243k 175,238 200,205 222,192 270,208 345,200 415,180r 462,195 488,207 512,245 535,257 560,262k 583,235 605,215 630,204 680,190 725,178r 750,195 775,215 800,222 825,237k 847,230 872,225 895,205 917,188r 945,235 965,258 992,268k 1017,215 1040,190 1062,180 1110,190r 1135,200 1160,230 1185,290 1208,312k 1230,305 1255,270 1280,265 1305,235 1330,208 1350,180r 1375,190 1400,200 1425,212 1450,218k 1472,210 1495,190`, 2.45);

function drawTrenes() {
  const done = open('trenes', 691, 91);
  grid(691, 781, [714, 730, 745, 761]);
  rect(28, 698, 1251, 714, '#daf8da');
  rect(28, 761, 1251, 777, '#ffdcda');
  const under = trend.map(p => [p[0], Math.min(p[1], 714.3)]);
  poly([[28, 714.3]].concat(under, [[1250, 714.3]]), '#80c480');
  poly(trend.concat(trendLag.slice().reverse()), '#c060e0', 'fill-opacity=".3"');
  poly(quick.concat(quick.map(p => [p[0] + 3, p[1]]).reverse()), '#e08080', 'fill-opacity=".3"');
  hline(698, 28, 1251, '#000');
  hline(714, 28, 1251, '#000');
  hline(737.500, 28, 1251, '#000090', 2, '5 4');
  hline(761, 28, 1251, '#000');
  hline(777, 28, 1251, '#000');
  path(quick.map(p => [p[0] + 3, p[1]]), '#333', 1, '4 2');
  path(trendLag, '#222', 4, '5 5');
  coloured(trend, { n: '#0000a0', r: '#ff0000' }, 4);
  coloured(quick, { k: '#000', r: '#e02828' }, 2);
  runs('@0,640 85,245 373,202 516,206 565,202 758,320 901,356 1045,203 1165,230 1214,218 1480,372 @640,640 175,243 270,201 320,198 366,192 583,246 847,237 895,215 1017,243 1112,188 1231,312 1470,212', 2.45).forEach(p => tri(p[0], p[1], true, '#0000b8'));
  runs('@0,640 445,207 541,200 589,206 830,308 1021,204 1069,203 1190,224 1285,195 @640,640 125,206 247,198 295,200 343,194 415,184 750,188 870,231 945,215 1088,185 1135,190 1375,186', 2.45).forEach(p => tri(p[0], p[1], false, '#b80000'));
  axis();
  tag(698, '', '#111', 31); tag(700, '', '#111', 31); tag(702, '', '#111', 31);
  tag(705, '90,947', '#222', 31);
  tag(716, '80', '#222', 13);
  tick(729, '60'); tick(745, '40');
  tag(737, '50', NAVY, 13);
  tag(761, '20', '#222', 13);
  tag(774, '0', '#222', 8);
  done();
}

const willy = runs(`@0,640 69,452g 290,455 300,456 320,447 345,451 375,451 395,447 420,449 445,475 468,446 495,449 516,446 541,460 565,443 590,458 615,464 660,461 685,476 710,463o 735,493g 758,474 780,466o 805,490 830,523b 855,509o 878,516b 900,497 925,492g 950,469 1000,469 1021,475 1045,464 1095,475 1140,468 1165,458 1190,457 1215,443 1240,443 1262,455 1310,446 1335,463o 1360,487 1383,511 1400,520d 1430,572 1455,586b 1480,568 1505,535 1530,523 1548,520
@640,640 0,535 30,515 55,498g 77,481 102,481o 125,513b 150,486g 175,463 200,469 222,457 247,466 270,443 295,455 320,452 343,443 400,443 440,447 485,452 510,469 535,455 605,447 655,449 680,443 728,443 750,463 775,461 800,446 825,470 847,452 870,446 918,443o 945,506g 965,475 992,457 1015,443 1040,443 1065,446 1088,455 1112,443 1135,455o 1160,483 1185,498g 1208,469 1230,469 1255,461 1280,466 1305,443 1330,443 1350,449 1375,443 1400,455 1425,461 1450,449 1475,446 1495,446`, 2.45);
const willyBands = [
  [0, '96-169 191-216 240-265 311-336 385-409 456-480 505-529 551-576 625-671 696-720 745-794 840-865 889-960 985-1009 1031-1056 1105-1249 1274-1321 1539-1561', '#c0c0fb'],
  [640, '42-113 137-186 208-233 257-282 306-355 426-451 522-642 666-715 762-811 835-882 906-931 955-1027 1098-1122 1196-1220 1242-1267 1291-1340 1362-1387 1436-1485', '#c0c0fb'],
  [0, '1416-1441 1561-1585', '#b85c60'], [0, '1441-1465', '#ffa4a4'], [0, '1514-1539 1585-1610', '#68c068']
];
const bands = (list, top, bottom) => list.forEach(([ox, src, c]) => src.split(' ').forEach(r => {
  const [a, b] = r.split('-').map(Number);
  rect(ox + a / 2.45, top, ox + b / 2.45, bottom, c);
}));

function drawWilly() {
  const done = open('willy', 782, 65);
  grid(782, 846, [815]);
  bands(willyBands, 782, 846);
  poly([[28, 801.3]].concat(willy.map(p => [p[0], Math.min(p[1], 801.3)]), [[1250, 801.3]]), '#30a020', 'fill-opacity=".42"');
  hline(787, 28, 1250, '#000', 1, '4 4');
  hline(801, 28, 1250, '#8080d8', 3);
  hline(801, 28, 1250, '#000080', 1);
  hline(815.500, 28, 1250, '#000090', 2, '5 4');
  hline(829, 28, 1250, '#f08080', 3);
  hline(829, 28, 1250, '#c00000', 1);
  hline(843, 28, 1250, '#000', 1, '4 4');
  coloured(willy, { g: '#00c800', o: '#ff9800', b: '#0000d8', d: '#a00000' }, 4);
  tri(573, 814, false, '#b80000', 6); tri(633, 815, false, '#b80000', 6);
  tri(614, 815, true, '#0000b8', 6); tri(643, 815, true, '#0000b8', 6);
  axis();
  tag(788, '-2,1917', '#00c800', 34);
  tag(801, '-25', NAVY, 16);
  tag(815, '-50', NAVY, 16);
  tag(829, '-75', '#c00000', 16);
  tag(839, '-100', '#222', 21);
  done();
}

const evoSlow = runs(`@0,640 69,811o 85,811g 145,811 160,805 205,800 250,797 300,790 350,781 400,777 445,771o 470,773g 540,766 590,755 612,754o 660,762 710,770 758,787 805,792 855,808 925,826g 975,815 1020,811 1070,811o 1190,813g 1200,811 1250,803 1310,792 1355,789o 1383,791 1405,797 1430,810 1455,826 1480,838 1505,848 1525,850g
@640,640 0,838 55,825 77,818 125,817 150,813 175,807 245,806 295,794 345,780 400,768 462,763 487,757o 535,761 605,767g 655,757 700,742 750,721 800,706 825,706o 870,715 918,715 945,720 965,730 1015,733g 1040,725 1062,712 1088,690 1112,668 1135,655o 1160,660 1185,675 1208,692 1230,708 1255,715 1280,718g 1305,715 1330,703 1355,695 1380,683 1400,670 1425,656o 1450,660g 1475,650 1498,643`, 2.45);
const evoFast = runs(`@0,640 69,818k 150,817 200,808 250,795 300,785 350,778 395,775 435,776m 470,786k 493,781 520,770 555,768m 570,768k 590,770m 612,778 640,789 685,800 735,816 758,826k 780,822m 810,824 830,840 855,856k 885,856 920,845 960,828 1000,822 1045,820 1095,812 1170,809 1215,801 1262,791 1310,778 1335,780m 1370,800 1405,825 1430,843 1455,868 1480,880k 1505,872 1530,855
@640,640 0,840m 30,843k 77,815 102,805m 150,808k 175,797 195,793 245,790 295,778 345,767 368,761m 420,760k 440,762k 465,765m 510,780 535,793k 580,791m 610,791k 655,773 705,752 750,731m 775,734k 800,731m 825,736 850,748k 870,740 918,735m 945,762 965,802k 992,780 1015,752 1040,722 1062,697 1088,687m 1112,688k 1135,685m 1160,720 1185,778 1208,793k 1230,770 1255,764m 1280,764k 1305,757 1330,725 1355,708 1375,703 1400,686m 1450,693k 1475,680 1497,658`, 2.45);

function drawAwesome() {
  const done = open('awesome', 847, 91);
  const zero = 915.3;
  grid(847, 937, [863, 889]);
  for (let i = -1; i <= 123; i++) {
    const x = Q0 + QW * i;
    const [s, sk] = at(evoSlow, x), [f, fk] = at(evoFast, x - 1);
    if (s < f) rect(x - 4, s, x + 4, Math.min(f, Math.max(zero, s)), sk === 'o' ? '#ffd2d2' : '#d4f8d4', `stroke="${sk === 'o' ? '#eebcbc' : '#b4e4b4'}" stroke-width=".6"`);
    const up = f < zero;
    const c = up ? (fk === 'm' ? '#ff10f0' : '#1818ff') : (fk === 'm' ? '#ff1010' : '#10a0a0');
    rect(x - 4, Math.min(f, zero), x + 4, Math.max(f, zero), c, up ? `stroke="${fk === 'k' ? '#000070' : '#c000b0'}"` : 'stroke="#333" stroke-width=".6"');
  }
  hline(915, 28, 1251, '#8080ff', 3);
  hline(915, 28, 1251, '#0000c0', 1);
  coloured(evoFast, { k: '#000030', m: '#b000b0' }, 4);
  coloured(evoSlow, { g: '#60f860', o: '#ff9800' }, 4);
  runs('@0,640 397,777 1119,813 1358,790 @640,640 8,837 152,812 462,762 1088,686', 2.45).forEach(p => tri(p[0], p[1], false, '#f8f000'));
  runs('@0,640 157,810 1096,816 1143,813 1551,846 @640,640 78,820 177,804 1040,720', 2.45).forEach(p => tri(p[0], p[1], true, '#00f0f0'));
  axis();
  tag(854, '11.658', '#40e040', 31);
  tag(859, '10.594', '#222', 31);
  tag(865, '10.594', '#0000e0', 31);
  tick(889, '5.000');
  tag(909, '0', '#0000e0', 8); tag(915, '0', '#0000e0', 8); tag(921, '0', '#0000e0', 8);
  done();
}

function drawBarra() {
  const done = open('barra', 938, 58);
  grid(938, 995, [943, 993]);
  rect(29, 938, 1255, 995, '#ffff88');
  bands([[0, '71-625 649-769 816-889 1200-1225 1274-1514', '#40ff40'],
    [640, '113-162 331-377 426-475 497-595 617-666 715-1051 1122-1242 1291-1316 1411-1485', '#40ff40']], 938, 995);
  hline(968, 28, 1250, '#000');
  axis();
  tick(943, '0,505');
  tag(968, '0,5000', '#222', 31);
  tick(991, '0,495');
  done();
}

function drawYears() {
  const done = open('years', 996, 14);
  for (let i = 0; i <= 46; i++) {
    const x = 44.5 + i * 39.22;
    line(x, 996, x, 999, GREY);
    text(x, 1008, 1995 + i, '#222', '', 'middle');
  }
  done();
}

function draw() {
  drawPrice(); drawTrenes(); drawWilly(); drawAwesome(); drawBarra(); drawYears();
}
draw();
window.addEventListener('resize', draw);
```
